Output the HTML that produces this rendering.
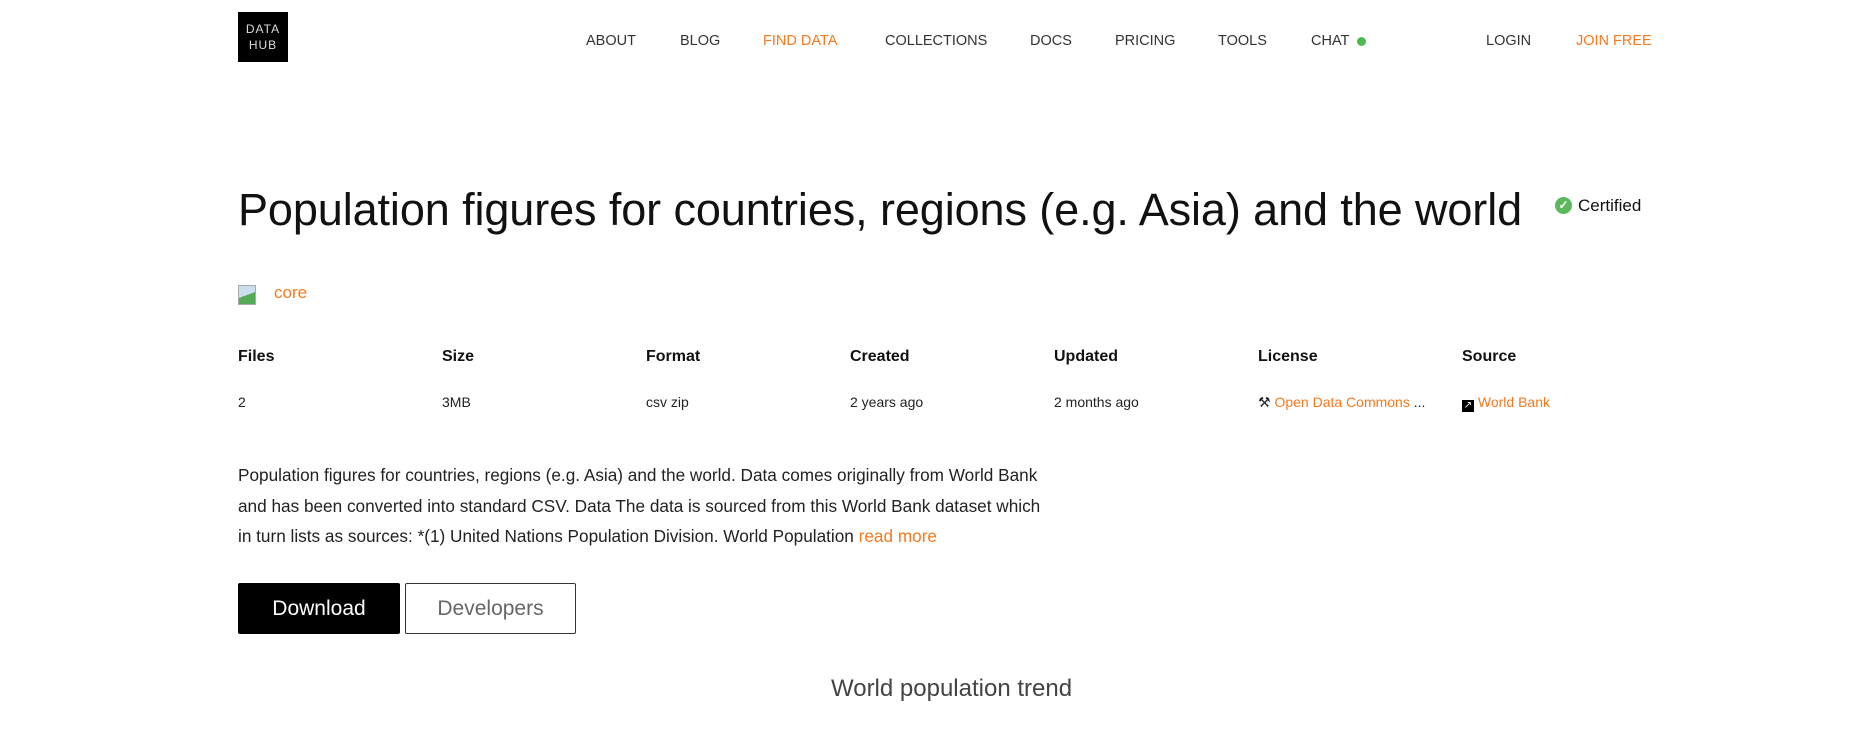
<!DOCTYPE html>
<html><head><meta charset="utf-8"><style>
*{margin:0;padding:0;box-sizing:border-box}
body{width:1875px;height:729px;background:#fff;font-family:"Liberation Sans",sans-serif;color:#111;position:relative;overflow:hidden}
.a{position:absolute;white-space:nowrap}
.logo{left:238px;top:12px;width:50px;height:50px;background:#000;color:#ddd;font-size:12px;letter-spacing:1px;text-align:center;line-height:16px;padding-top:9px}
.nav{top:33px;font-size:14.5px;color:#333}
.o{color:#f47a20}
.th{top:348px;font-size:16px;font-weight:bold}
.td{top:394px;font-size:14px;color:#222}
</style></head><body>
<div class="a logo">DATA<br>HUB</div>
<div class="a nav" style="left:586px">ABOUT</div>
<div class="a nav" style="left:680px">BLOG</div>
<div class="a nav o" style="left:763px">FIND DATA</div>
<div class="a nav" style="left:885px">COLLECTIONS</div>
<div class="a nav" style="left:1030px">DOCS</div>
<div class="a nav" style="left:1115px">PRICING</div>
<div class="a nav" style="left:1218px">TOOLS</div>
<div class="a nav" style="left:1311px">CHAT</div>
<div class="a" style="left:1357px;top:37px;width:9px;height:9px;border-radius:50%;background:#4cbb4c"></div>
<div class="a nav" style="left:1486px">LOGIN</div>
<div class="a nav o" style="left:1576px">JOIN FREE</div>

<div class="a" style="left:238px;top:184px;font-size:45px;letter-spacing:-0.1px">Population figures for countries, regions (e.g. Asia) and the world</div>
<div class="a" style="left:1555px;top:197px;width:17px;height:17px;border-radius:50%;background:#5cb85c;color:#fff;font-size:12px;text-align:center;line-height:17px;font-weight:bold">✓</div>
<div class="a" style="left:1578px;top:196px;font-size:17px">Certified</div>

<div class="a" style="left:238px;top:285px;width:18px;height:20px;border:1px solid #aaa;background:linear-gradient(160deg,#cde 50%,#5a5 50%)"></div>
<div class="a o" style="left:274px;top:283px;font-size:17px">core</div>

<div class="a th" style="left:238px">Files</div>
<div class="a th" style="left:442px">Size</div>
<div class="a th" style="left:646px">Format</div>
<div class="a th" style="left:850px">Created</div>
<div class="a th" style="left:1054px">Updated</div>
<div class="a th" style="left:1258px">License</div>
<div class="a th" style="left:1462px">Source</div>
<div class="a td" style="left:238px">2</div>
<div class="a td" style="left:442px">3MB</div>
<div class="a td" style="left:646px">csv zip</div>
<div class="a td" style="left:850px">2 years ago</div>
<div class="a td" style="left:1054px">2 months ago</div>
<div class="a td" style="left:1258px">⚒ <span class="o">Open Data Commons</span> ...</div>
<div class="a td" style="left:1462px"><span style="display:inline-block;width:12px;height:12px;background:#000;color:#fff;font-size:10px;line-height:12px;text-align:center;vertical-align:-1px">↗</span> <span class="o">World Bank</span></div>

<div class="a" style="left:238px;top:460px;font-size:17.2px;line-height:30.5px;color:#222;white-space:nowrap">Population figures for countries, regions (e.g. Asia) and the world. Data comes originally from World Bank<br>and has been converted into standard CSV. Data The data is sourced from this World Bank dataset which<br>in turn lists as sources: *(1) United Nations Population Division. World Population <span class="o">read more</span></div>

<div class="a" style="left:238px;top:583px;width:162px;height:51px;background:#000;color:#fff;font-size:21px;text-align:center;line-height:51px;border-radius:2px">Download</div>
<div class="a" style="left:405px;top:583px;width:171px;height:51px;border:1px solid #333;color:#666;font-size:21px;text-align:center;line-height:49px;border-radius:2px">Developers</div>

<div class="a" style="left:831px;top:675px;font-size:24px;color:#444">World population trend</div>
</body></html>
